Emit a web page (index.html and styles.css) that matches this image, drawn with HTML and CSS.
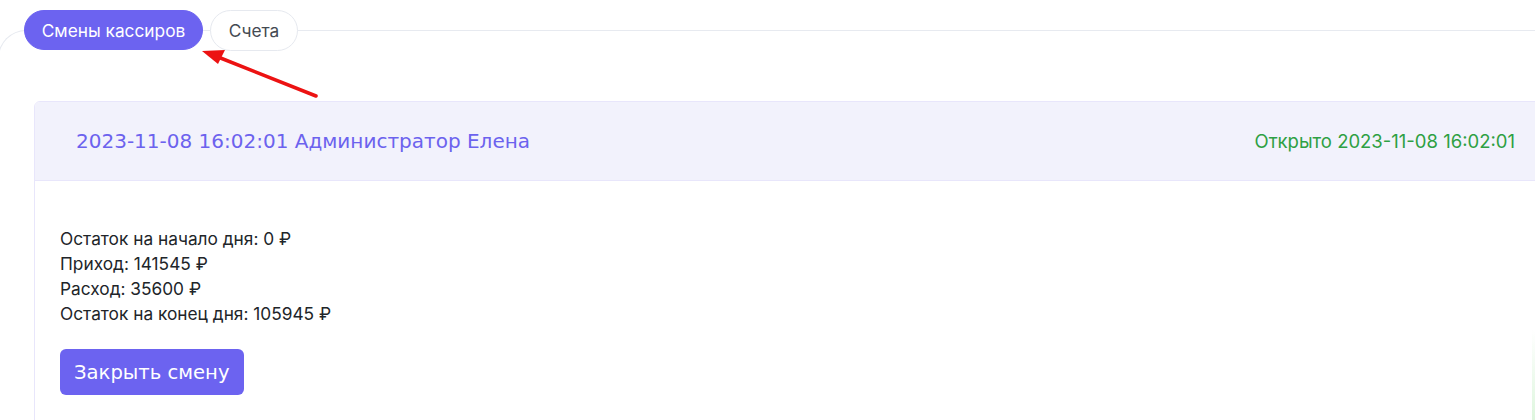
FILE: index.html
```html
<!DOCTYPE html>
<html lang="ru">
<head>
<meta charset="utf-8">
<title>Смены кассиров</title>
<link rel="stylesheet" href="styles.css">
</head>
<body>
<div class="page">
  <div class="tabs">
    <button class="tab tab-active">Смены кассиров</button>
    <button class="tab">Счета</button>
  </div>
  <div class="panel">
    <div class="card">
      <div class="card-header">
        <span class="shift-title">2023-11-08 16:02:01 Администратор Елена</span>
        <span class="shift-status">Открыто 2023-11-08 16:02:01</span>
      </div>
      <div class="card-body">
        <div class="line">Остаток на начало дня: 0 ₽</div>
        <div class="line">Приход: 141545 ₽</div>
        <div class="line">Расход: 35600 ₽</div>
        <div class="line">Остаток на конец дня: 105945 ₽</div>
        <button class="close-btn">Закрыть смену</button>
      </div>
    </div>
  </div>
  <svg class="arrow" width="130" height="60" viewBox="0 0 130 60">
    <line x1="124" y1="54" x2="26" y2="15" stroke="#ec1212" stroke-width="3.5" stroke-linecap="round"/>
    <polygon points="10,9 33,8 26,22" fill="#ec1212"/>
  </svg>
  <div class="edge-glow"></div>
</div>
</body>
</html>
```
FILE: styles.css
```css
html, body {
  margin: 0;
  padding: 0;
  background: #ffffff;
  overflow: hidden;
}
body {
  width: 1535px;
  height: 420px;
  font-family: Inter, "Noto Sans", sans-serif;
  color: #212529;
}
.page {
  position: relative;
  height: 420px;
}
.tabs {
  display: flex;
  gap: 7px;
  padding: 10px 0 0 24px;
  position: relative;
  z-index: 2;
}
.tab {
  font-family: Inter, "Noto Sans", sans-serif;
  font-size: 17.3px;
  height: 41px;
  border-radius: 21px;
  border: 1px solid #e6e9ef;
  background: #ffffff;
  color: #444a52;
  padding: 0 17px;
  width: 88px;
  cursor: pointer;
}
.tab-active {
  height: 40px;
  width: 179px;
  background: #6c63f0;
  border-color: #6c63f0;
  color: #ffffff;
  padding: 0;
}
.panel {
  margin-top: -21px;
  margin-left: -2px;
  border-top: 1px solid #e7eaf0;
  border-left: 1px solid #e7eaf0;
  border-top-left-radius: 28px;
  padding: 70px 0 0 35px;
  height: 400px;
  box-sizing: border-box;
}
.card {
  width: 1540px;
  border: 1px solid #e8e6fb;
  border-radius: 6px;
  overflow: hidden;
  height: 330px;
  box-sizing: border-box;
}
.card-header {
  display: flex;
  justify-content: space-between;
  align-items: center;
  height: 78px;
  background: #f2f2fc;
  border-bottom: 1px solid #e8e6fb;
  padding: 0 58px 0 41px;
}
.shift-title {
  font-family: "DejaVu Sans", Verdana, sans-serif;
  font-size: 20px;
  color: #6c62ee;
}
.shift-status {
  font-family: Inter, "Noto Sans", sans-serif;
  font-size: 18.5px;
  color: #2ea043;
}
.card-body {
  padding: 45px 0 0 25px;
}
.line {
  font-size: 17.3px;
  line-height: 25px;
  color: #212529;
}
.close-btn {
  margin-top: 23px;
  height: 46px;
  padding: 0 14px;
  background: #6c63f0;
  color: #ffffff;
  border: none;
  border-radius: 6px;
  font-family: "DejaVu Sans", Verdana, sans-serif;
  font-size: 19.6px;
  cursor: pointer;
}
.arrow {
  position: absolute;
  left: 192px;
  top: 42px;
}
.edge-glow {
  position: absolute;
  right: 0;
  top: 330px;
  width: 3px;
  height: 90px;
  background: linear-gradient(to bottom, rgba(200, 240, 200, 0), rgba(200, 240, 200, 0.6));
}
```
